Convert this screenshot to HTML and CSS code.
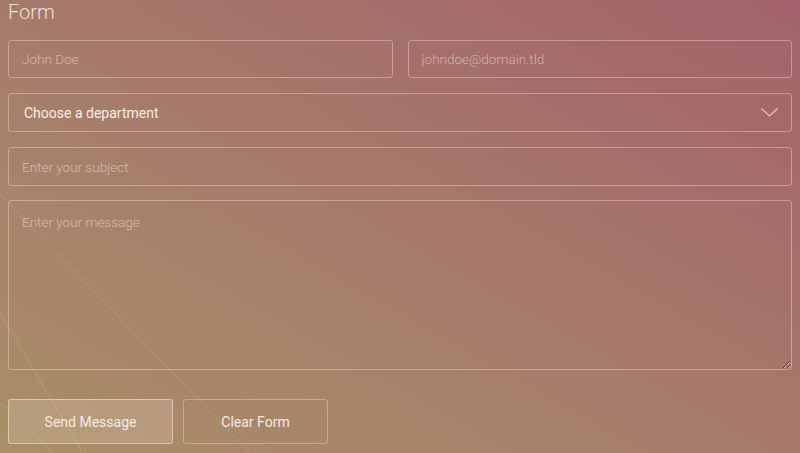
FILE: index.html
```html
<!DOCTYPE html>
<html lang="en">
<head>
<meta charset="utf-8">
<title>Form</title>
<link rel="stylesheet" href="styles.css">
</head>
<body>
<svg class="deco" width="800" height="453" viewBox="0 0 800 453" aria-hidden="true">
  <line x1="0" y1="194" x2="250" y2="453"/>
  <line x1="0" y1="313" x2="83" y2="453"/>
  <line x1="0" y1="403" x2="53" y2="453"/>
</svg>
<main class="page">
  <h1 class="title">Form</h1>
  <form class="form">
    <div class="row">
      <input class="field" type="text" placeholder="John Doe">
      <input class="field" type="email" placeholder="johndoe@domain.tld">
    </div>
    <div class="select-wrap">
      <select class="field select">
        <option>Choose a department</option>
      </select>
      <svg class="chevron" width="17" height="9" viewBox="0 0 17 9" aria-hidden="true">
        <polyline points="0.5,0.5 8.5,8 16.5,0.5"/>
      </svg>
    </div>
    <input class="field subject" type="text" placeholder="Enter your subject">
    <textarea class="field message" placeholder="Enter your message"></textarea>
    <div class="actions">
      <button type="button" class="btn btn-primary">Send Message</button>
      <button type="button" class="btn btn-secondary">Clear Form</button>
    </div>
  </form>
</main>
</body>
</html>
```
FILE: styles.css
```css
html, body {
  margin: 0;
  padding: 0;
  height: 100%;
}
body {
  width: 800px;
  height: 453px;
  overflow: hidden;
  position: relative;
  font-family: Roboto, "Liberation Sans", sans-serif;
  background: linear-gradient(to top right, #a98e66 0%, #a7836a 30%, #a67a6a 50%, #a56f6a 72%, #a3626b 100%);
}
.deco {
  position: absolute;
  left: 0;
  top: 0;
  pointer-events: none;
}
.deco line {
  stroke: rgba(255, 240, 220, 0.16);
  stroke-width: 1;
}
.page {
  position: relative;
  padding: 0 8px;
}
.title {
  margin: 0;
  font-size: 20px;
  line-height: 24px;
  font-weight: 300;
  color: #efe1d6;
}
.form {
  display: flex;
  flex-direction: column;
  margin-top: 16px;
}
.row {
  display: flex;
  gap: 15px;
}
.field {
  box-sizing: border-box;
  background: transparent;
  border: 1px solid rgba(255, 235, 225, 0.38);
  border-radius: 3px;
  font-family: Roboto, "Liberation Sans", sans-serif;
  font-size: 13.5px;
  font-weight: 300;
  color: #f4ebe4;
  outline: none;
  margin: 0;
}
.field::placeholder {
  color: rgba(255, 236, 225, 0.55);
}
.row .field {
  flex: 1 1 0;
  min-width: 0;
  height: 38px;
  padding: 0 13px;
}
.select-wrap {
  position: relative;
  margin-top: 15px;
}
.select {
  -webkit-appearance: none;
  appearance: none;
  width: 100%;
  height: 39px;
  padding: 0 15px;
  font-size: 14px;
  font-weight: 400;
  color: #f7efe9;
}
.chevron {
  position: absolute;
  right: 14px;
  top: 15px;
  pointer-events: none;
}
.chevron polyline {
  fill: none;
  stroke: rgba(255, 236, 228, 0.75);
  stroke-width: 1.2;
}
.subject {
  width: 100%;
  height: 39px;
  margin-top: 15px;
  padding: 0 13px;
}
.message {
  width: 100%;
  height: 170px;
  margin-top: 14px;
  padding: 13px 13px;
  resize: vertical;
}
.actions {
  display: flex;
  gap: 10px;
  margin-top: 29px;
}
.btn {
  box-sizing: border-box;
  height: 45px;
  border-radius: 3px;
  font-family: Roboto, "Liberation Sans", sans-serif;
  font-size: 14px;
  font-weight: 400;
  color: #f5ebe2;
  cursor: pointer;
}
.btn-primary {
  width: 165px;
  background: rgba(255, 240, 228, 0.16);
  border: 1px solid rgba(255, 240, 228, 0.5);
}
.btn-secondary {
  width: 145px;
  background: transparent;
  border: 1px solid rgba(255, 235, 225, 0.35);
}
```
